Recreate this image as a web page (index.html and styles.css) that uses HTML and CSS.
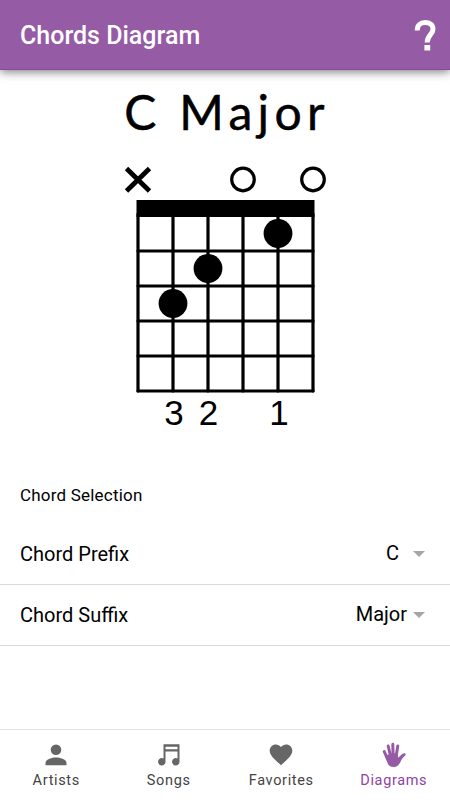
FILE: index.html
```html
<!DOCTYPE html>
<html lang="en">

<head>
    <meta charset="UTF-8">
    <meta name="viewport" content="width=device-width, initial-scale=1.0">
    <title>Chords Diagram</title>
    <link rel="stylesheet" href="styles.css">
</head>

<body>
    <header class="toolbar">
        <h1 class="toolbar-title">Chords Diagram</h1>
        <button class="help-btn" aria-label="Help">
            <svg width="24" height="34" viewBox="0 0 24 34">
                <path d="M4.200 12.500C4.200 7 7.500 4.600 12 4.600C17 4.600 20 7 20 11C20 16.500 14.200 17 14.200 24.500" fill="none" stroke="#fff" stroke-width="5" />
                <path d="M11.400 27h5.800v5.500h-5.800z" fill="#fff" />
            </svg>
        </button>
    </header>

    <main class="content">
        <section class="chord">
            <h2 class="chord-name">C Major</h2>
            <svg class="chord-diagram" width="210" height="290" viewBox="120 160 210 290">
                <!-- muted and open strings -->
                <path class="mark-muted" d="M126.500 168.500l23 22.500M149.500 168.500l-23 22.500" />
                <circle class="mark-open" cx="243" cy="179.500" r="11.300" />
                <circle class="mark-open" cx="313" cy="179.500" r="11.300" />
                <!-- nut -->
                <rect x="136.500" y="200" width="178" height="17" />
                <!-- frets and strings -->
                <path class="grid" d="M138 251h175M138 286h175M138 321h175M138 356h175M138 391h175" />
                <path class="grid" d="M138 214v177M173 214v177M208 214v177M243 214v177M278 214v177M313 214v177" />
                <!-- fingers -->
                <circle cx="278" cy="233.500" r="14.400" />
                <circle cx="208" cy="268.500" r="14.400" />
                <circle cx="173" cy="303.500" r="14.400" />
                <text class="finger" x="174" y="425">3</text>
                <text class="finger" x="208.500" y="425">2</text>
                <text class="finger" x="279" y="425">1</text>
            </svg>
        </section>

        <section class="selection">
            <h3 class="selection-title">Chord Selection</h3>
            <div class="item">
                <span class="item-label">Chord Prefix</span>
                <span class="item-value value-prefix">C</span>
                <span class="arrow"></span>
            </div>
            <div class="item">
                <span class="item-label">Chord Suffix</span>
                <span class="item-value">Major</span>
                <span class="arrow"></span>
            </div>
        </section>
    </main>

    <nav class="tabs">
        <a class="tab">
            <svg class="tab-icon" viewBox="0 0 28 28">
                <circle cx="14" cy="8.800" r="5.300" />
                <path d="M3.500 24.300v-2.600c0-3.500 7-5.300 10.500-5.300s10.500 1.800 10.500 5.300v2.600z" />
            </svg>
            <span>Artists</span>
        </a>
        <a class="tab">
            <svg class="tab-icon" viewBox="0 0 28 28">
                <path fill-rule="evenodd" d="M8.500 3.300h16v17.500a3.700 3.700 0 1 1-2-3.300v-7H10.500v10.300a3.700 3.700 0 1 1-2-3.300zM10.500 5.700v2.600h12v-2.600z" />
            </svg>
            <span>Songs</span>
        </a>
        <a class="tab">
            <svg class="tab-icon" viewBox="0 0 28 28">
                <path d="M14 24.200C8 18.500 2.700 14.500 2.700 9.700C2.700 6.200 5.500 3.500 8.800 3.500C10.800 3.500 12.700 4.500 14 6C15.300 4.500 17.200 3.500 19.200 3.500C22.500 3.500 25.300 6.200 25.300 9.700C25.300 14.500 20 18.500 14 24.200z" />
            </svg>
            <span>Favorites</span>
        </a>
        <a class="tab tab-active">
            <svg class="tab-icon" viewBox="0 0 28 28">
                <path class="hand-fingers" d="M4.200 10.500l3.500 8M8.200 5l2.300 10M12.800 3.300l.3 12M17.800 5l-1.800 11" />
                <path d="M5.200 14.500L14 12l3.700 2 .8 2.700c2-2.200 3.800-4 5.700-4.400 1.300-.2 1.900.9 1.100 1.900-1.500 1.700-3.200 3-4.200 5.200C19.500 23.500 17.500 26 13.500 26c-3 0-5-1.400-6-4z" />
            </svg>
            <span>Diagrams</span>
        </a>
    </nav>
</body>

</html>
```

FILE: styles.css
```css
* {
    margin: 0;
    padding: 0;
    box-sizing: border-box;
}

body {
    display: flex;
    flex-direction: column;
    height: 100vh;
    overflow: hidden;
    background: #fff;
    color: #000;
    font-family: Roboto, sans-serif;
}

.toolbar {
    display: flex;
    justify-content: space-between;
    align-items: center;
    height: 70px;
    padding: 1px 13px 0 20px;
    background: #965ba5;
    border-bottom: 1px solid #8a4a9d;
    box-shadow: 0 2px 9px rgba(0, 0, 0, 0.5);
    color: #fff;
}

.toolbar-title {
    padding-top: 1px;
    font-size: 25px;
    font-weight: 500;
}

.help-btn {
    display: flex;
    border: none;
    background: none;
}

.content {
    flex: 1;
}

.chord {
    display: flex;
    flex-direction: column;
    align-items: center;
    padding-top: 13px;
}

.chord-name {
    height: 77px;
    padding-left: 4px;
    font-family: Lato, sans-serif;
    font-size: 48px;
    font-weight: 400;
    line-height: 57px;
    letter-spacing: 5.3px;
    white-space: nowrap;
    -webkit-text-stroke: 0.5px #000;
}

.mark-muted,
.mark-open,
.grid {
    fill: none;
    stroke: #000;
}

.mark-muted {
    stroke-width: 4.8;
}

.mark-open,
.grid {
    stroke-width: 3.2;
}

.grid {
    stroke-linecap: round;
}

.finger {
    font-family: "Liberation Sans", Arial, sans-serif;
    font-size: 35px;
    text-anchor: middle;
}

.selection {
    padding-top: 34px;
}

.selection-title {
    padding-left: 20px;
    height: 40px;
    font-size: 17px;
    font-weight: 400;
    line-height: 23px;
    letter-spacing: 0.2px;
}

.item {
    display: flex;
    align-items: center;
    height: 61px;
    padding: 0 25px 0 20px;
    border-bottom: 1px solid #d9d9d9;
    font-size: 20px;
}

.item-label {
    flex: 1;
}

.item-value {
    margin-right: 6px;
    padding-bottom: 2px;
}

.value-prefix {
    margin-right: 14px;
}

.arrow {
    border: 6px solid transparent;
    border-top-color: #a6a6a6;
    border-bottom: none;
}

.tabs {
    display: flex;
    height: 71px;
    border-top: 1px solid #e2e2e2;
}

.tab {
    flex: 1;
    display: flex;
    flex-direction: column;
    align-items: center;
    padding-top: 11px;
    color: #444;
    font-size: 14.5px;
    line-height: 24px;
    letter-spacing: 0.65px;
}

.tab-icon {
    width: 28px;
    height: 28px;
    fill: #666;
}

.tab-active {
    color: #8e44a0;
}

.tab-active .tab-icon {
    fill: #965ba5;
}

.hand-fingers {
    fill: none;
    stroke: #965ba5;
    stroke-width: 3;
    stroke-linecap: round;
}
```
